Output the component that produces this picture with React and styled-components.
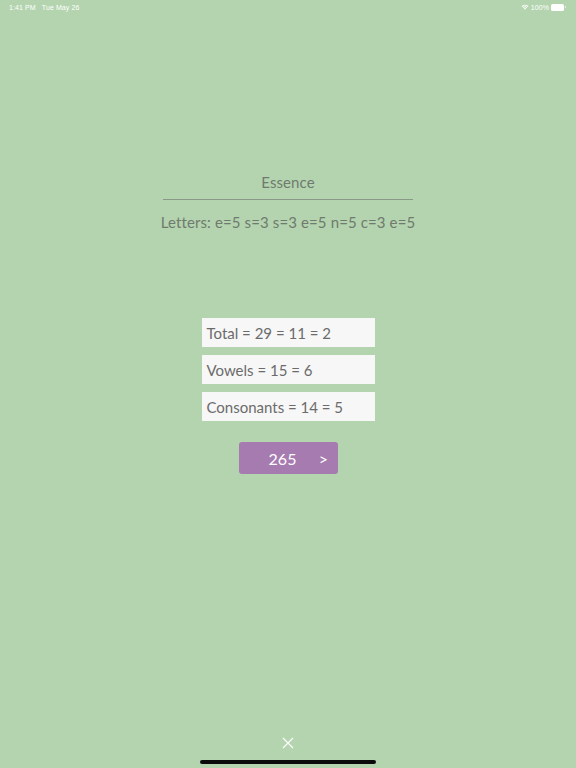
import React from 'react'
import styled, { createGlobalStyle } from 'styled-components'

const Global = createGlobalStyle`
  html, body { margin: 0; padding: 0; }
  body {
    background: #b3d4ae;
    font-family: Lato, "Open Sans", "Noto Sans", sans-serif;
  }
`

const Page = styled.div`
  position: relative;
  width: 576px;
  height: 768px;
  overflow: hidden;
  background: #b3d4ae;
  display: flex;
  flex-direction: column;
  align-items: center;
`

const StatusBar = styled.div`
  align-self: stretch;
  height: 14px;
  padding: 0 10px 0 9px;
  display: flex;
  align-items: center;
  justify-content: space-between;
  color: #ffffff;
  font-family: "Liberation Sans", Arial, sans-serif;
  font-size: 7px;
  letter-spacing: 0.1px;
`

const StatusGroup = styled.div`
  display: flex;
  align-items: center;
  gap: ${p => p.gap || 6}px;
`

const Battery = styled.div`
  display: flex;
  align-items: center;
  gap: 1px;

  .body {
    width: 11px;
    height: 5px;
    border-radius: 1.5px;
    background: #ffffff;
    border: 0.5px solid rgba(255,255,255,0.8);
  }
  .tip {
    width: 1px;
    height: 2px;
    background: rgba(255,255,255,0.6);
  }
`

const Title = styled.div`
  margin-top: 159px;
  height: 18px;
  line-height: 18px;
  font-size: 15px;
  color: #707a6e;
  letter-spacing: 0.1px;
`

const Divider = styled.div`
  margin-top: 8px;
  width: 250px;
  height: 1px;
  background: #8a9887;
`

const Letters = styled.div`
  margin-top: 13px;
  height: 18px;
  line-height: 18px;
  font-size: 15px;
  color: #707a6e;
  letter-spacing: 0.12px;
  white-space: nowrap;
`

const Results = styled.div`
  margin-top: 87px;
  display: flex;
  flex-direction: column;
  gap: 8px;
`

const ResultBox = styled.div`
  width: 168px;
  height: 29px;
  padding-left: 5px;
  background: #f7f7f7;
  display: flex;
  align-items: center;
  font-size: 15px;
  color: #6b6b6b;
`

const NextButton = styled.button`
  margin-top: 21px;
  width: 99px;
  height: 32px;
  border: none;
  border-radius: 3px;
  background: #a67baf;
  color: #ffffff;
  font-family: inherit;
  font-size: 16px;
  display: flex;
  align-items: center;
  padding: 0;
  cursor: pointer;

  .value {
    width: 32px;
    margin-left: 28px;
    text-align: center;
  }
  .arrow {
    width: 10px;
    margin-left: 20px;
    text-align: center;
  }
`

const Spacer = styled.div`
  flex: 1;
`

const CloseButton = styled.div`
  width: 12px;
  height: 12px;
  margin-bottom: 11px;
  display: flex;
  align-items: center;
  justify-content: center;
`

const HomeIndicator = styled.div`
  width: 176px;
  height: 4px;
  border-radius: 2px;
  background: #0a0a0a;
  margin-bottom: 4px;
`

export default function App() {
  const results = [
    'Total = 29 = 11 = 2',
    'Vowels = 15 = 6',
    'Consonants = 14 = 5',
  ]

  return (
    <Page>
      <Global />
      <StatusBar>
        <StatusGroup gap={6}>
          <span>1:41 PM</span>
          <span>Tue May 26</span>
        </StatusGroup>
        <StatusGroup gap={2}>
          <svg width="8" height="6" viewBox="0 0 16 12">
            <path d="M8 11.5 L5.6 9 A3.4 3.4 0 0 1 10.4 9 Z" fill="#fff" />
            <path d="M3.4 6.8 A6.6 6.6 0 0 1 12.6 6.8 L11.2 8.2 A4.6 4.6 0 0 0 4.8 8.2 Z" fill="#fff" />
            <path d="M1 4.4 A10 10 0 0 1 15 4.4 L13.6 5.8 A8 8 0 0 0 2.4 5.8 Z" fill="#fff" />
          </svg>
          <span>100%</span>
          <Battery>
            <div className="body" />
            <div className="tip" />
          </Battery>
        </StatusGroup>
      </StatusBar>

      <Title>Essence</Title>
      <Divider />
      <Letters>Letters: e=5 s=3 s=3 e=5 n=5 c=3 e=5</Letters>

      <Results>
        {results.map(r => (
          <ResultBox key={r}>{r}</ResultBox>
        ))}
      </Results>

      <NextButton>
        <span className="value">265</span>
        <span className="arrow">&gt;</span>
      </NextButton>

      <Spacer />

      <CloseButton>
        <svg width="12" height="12" viewBox="0 0 12 12">
          <path d="M1 1 L11 11 M11 1 L1 11" stroke="#ffffff" strokeWidth="1.2" />
        </svg>
      </CloseButton>
      <HomeIndicator />
    </Page>
  )
}
